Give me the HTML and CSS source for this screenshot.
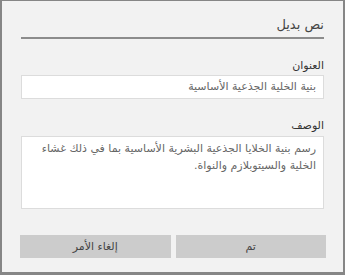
FILE: index.html
```html
<!DOCTYPE html>
<html lang="ar" dir="rtl">
<head>
    <meta charset="UTF-8">
    <title>نص بديل</title>
    <link rel="stylesheet" href="styles.css">
</head>
<body>
    <div class="dialog">
        <div class="dialog-title">نص بديل</div>

        <div class="field field-title">
            <label class="field-label" for="title">العنوان</label>
            <div class="text-box" id="title">بنية الخلية الجذعية الأساسية</div>
        </div>

        <div class="field field-desc">
            <label class="field-label" for="desc">الوصف</label>
            <div class="text-area" id="desc">رسم بنية الخلايا الجذعية البشرية الأساسية بما في ذلك غشاء الخلية والسيتوبلازم والنواة.</div>
        </div>

        <div class="actions">
            <button class="btn">تم</button>
            <button class="btn">إلغاء الأمر</button>
        </div>
    </div>
</body>
</html>
```

FILE: styles.css
```css
html, body {
    margin: 0;
    padding: 0;
}

body {
    font-family: "DejaVu Sans", "Noto Sans", sans-serif;
    color: #333;
}

.dialog {
    width: 345px;
    height: 275px;
    box-sizing: border-box;
    background-color: #f2f2f2;
    border-style: solid;
    border-color: #868686;
    border-width: 1px 2px 3px 2px;
    padding: 0 19px 0 19px;
}

.dialog-title {
    margin-top: 11px;
    height: 25px;
    line-height: 25px;
    font-size: 13px;
    color: #444;
    border-bottom: 2px solid #8c8c8c;
}

.field-label {
    display: block;
    height: 16px;
    line-height: 16px;
    font-size: 11px;
    color: #333;
}

.field-title {
    margin-top: 19px;
}

.field-desc {
    margin-top: 19px;
}

.text-box {
    margin-top: 1px;
    height: 24px;
    box-sizing: border-box;
    background-color: white;
    border: 1px solid #dcdcdc;
    padding: 0 7px;
    line-height: 22px;
    font-size: 11px;
    color: #666;
}

.text-area {
    margin-top: 2px;
    height: 73px;
    box-sizing: border-box;
    background-color: white;
    border: 1px solid #dcdcdc;
    padding: 3px 7px;
    line-height: 17px;
    font-size: 11px;
    color: #666;
}

.actions {
    display: flex;
    gap: 5px;
    margin: 26px -2px 0 -1px;
}

.btn {
    flex: 1;
    height: 23px;
    border: none;
    background-color: #cccccc;
    color: #444;
    font-family: "DejaVu Sans", "Noto Sans", sans-serif;
    font-size: 11px;
    padding: 0;
}
```
